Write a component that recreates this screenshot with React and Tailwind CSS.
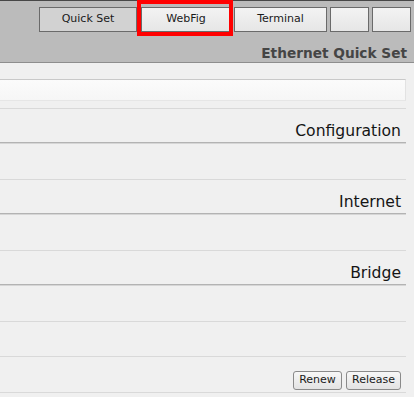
import React from 'react'

const tabs = [
  { label: 'Quick Set', w: 'w-[98px]', active: true },
  { label: 'WebFig', w: 'w-[90px] ml-[1px]' },
  { label: 'Terminal', w: 'w-[93px]' },
  { label: '', w: 'w-[39px]' },
  { label: '', w: 'w-[39px]' },
]

function Header({ title }) {
  return (
    <div className="h-[34px] border-b border-[#b3b3b3] flex justify-end pr-[5px] pt-[13px]">
      <span className="text-[15.6px] leading-[18px] text-[#151515]">{title}</span>
    </div>
  )
}

function Row({ h = 'h-[37px]', top = false, children }) {
  return (
    <div
      className={`${h} border-b border-[#d9d9d9] ${top ? 'border-t border-t-[#d6d6d6]' : ''} flex items-end justify-end`}
    >
      {children}
    </div>
  )
}

export default function App() {
  return (
    <div
      className="relative w-[414px] h-[397px] overflow-hidden bg-[#f0f0f0]"
      style={{ fontFamily: '"DejaVu Sans", Verdana, sans-serif' }}
    >
      {/* top bar */}
      <div className="h-[63px] bg-[#bbbbbb] border-t border-t-[#474747] border-b border-b-[#8e8e8e] flex flex-col">
        <div className="mt-[6px] flex justify-end gap-[3px] pr-[3px]">
          {tabs.map((t, i) => (
            <div
              key={i}
              className={`${t.w} h-[25px] border border-[#6a6a6a] flex items-center justify-center text-[11px] text-[#1a1a1a] ${
                t.active ? 'bg-[#d2d2d2]' : 'bg-gradient-to-b from-[#f3f3f3] to-[#e6e6e6]'
              }`}
            >
              {t.label}
            </div>
          ))}
        </div>
        <div className="mt-[13px] flex justify-end pr-[7px]">
          <span className="text-[13.7px] leading-[16px] font-bold text-[#454545]">Ethernet Quick Set</span>
        </div>
      </div>

      {/* annotation */}
      <div className="absolute left-[137px] top-0 w-[96px] h-[36px] border-4 border-[#ff0000]" />

      <div className="pr-[8px]">
        <div className="h-[16px]" />
        <div className="h-[22px] border border-[#c9c9c9] border-r-[#e2e2e2] border-b-[#e6e6e6] border-l-0 bg-gradient-to-b from-[#fbfbfb] to-[#f6f6f6]" />
        <div className="h-[8px] border-b border-[#d9d9d9]" />

        <Header title="Configuration" />
        <Row top />
        <Header title="Internet" />
        <Row top />
        <Header title="Bridge" />
        <Row top />
        <Row h="h-[35px]" />
        <Row h="h-[36px]">
          <div className="flex gap-[4px] pr-[5px] pb-[2px]">
            <div className="w-[49px] h-[19px] rounded-[3px] border border-[#8a8a8a] bg-gradient-to-b from-[#f7f7f7] to-[#e3e3e3] flex items-center justify-center text-[11px] text-[#1a1a1a]">
              Renew
            </div>
            <div className="w-[55px] h-[19px] rounded-[3px] border border-[#8a8a8a] bg-gradient-to-b from-[#f7f7f7] to-[#e3e3e3] flex items-center justify-center text-[11px] text-[#1a1a1a]">
              Release
            </div>
          </div>
        </Row>
      </div>
    </div>
  )
}
